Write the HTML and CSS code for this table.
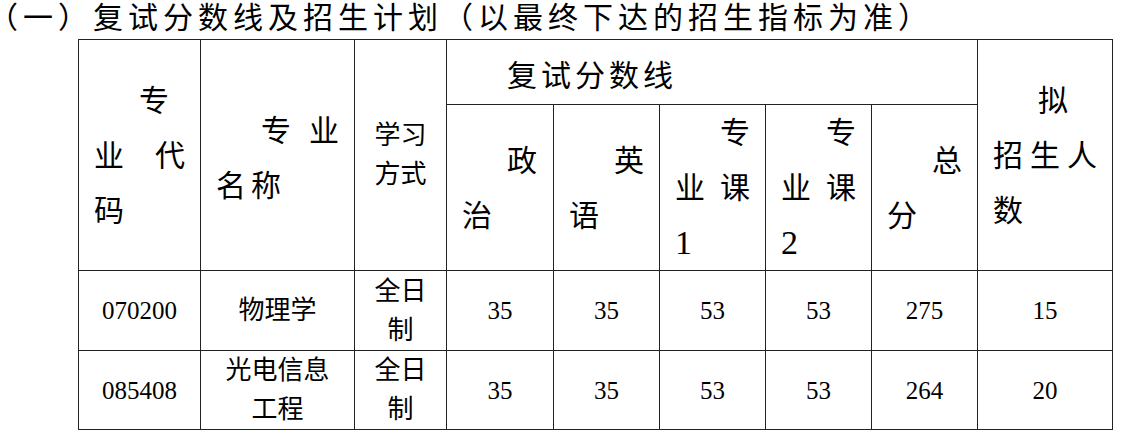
FILE: index.html
```html
<!DOCTYPE html>
<html lang="zh-CN">
<head>
<meta charset="utf-8">
<title>复试分数线及招生计划</title>
<link rel="stylesheet" href="styles.css">
</head>
<body>
<h1 class="title"><span class="lp">（</span>一）复试分数线及招生计划（以最终下达的招生指标为准）</h1>
<table class="plan">
  <colgroup>
    <col class="w-code"><col class="w-name"><col class="w-mode">
    <col class="w-s1"><col class="w-s"><col class="w-s"><col class="w-s"><col class="w-s">
    <col class="w-num">
  </colgroup>
  <tr class="r-h1">
    <td rowspan="2" class="hc">
      <div class="ln ind">专</div>
      <div class="ln j"><span>业</span><span>代</span></div>
      <div class="ln">码</div>
    </td>
    <td rowspan="2" class="hc shift">
      <div class="ln ind j"><span>专</span><span>业</span></div>
      <div class="ln sp">名称</div>
    </td>
    <td rowspan="2" class="mode">学习<br>方式</td>
    <td colspan="5" class="group">复试分数线</td>
    <td rowspan="2" class="hc">
      <div class="ln ind">拟</div>
      <div class="ln j"><span>招</span><span>生</span><span>人</span></div>
      <div class="ln">数</div>
    </td>
  </tr>
  <tr class="r-h2">
    <td class="hc"><div class="ln ind">政</div><div class="ln">治</div></td>
    <td class="hc"><div class="ln ind">英</div><div class="ln">语</div></td>
    <td class="hc"><div class="ln ind">专</div><div class="ln j"><span>业</span><span>课</span></div><div class="ln dg">1</div></td>
    <td class="hc"><div class="ln ind">专</div><div class="ln j"><span>业</span><span>课</span></div><div class="ln dg">2</div></td>
    <td class="hc"><div class="ln ind">总</div><div class="ln">分</div></td>
  </tr>
  <tr class="r-d1">
    <td class="num">070200</td>
    <td class="txt">物理学</td>
    <td class="txt">全日<br>制</td>
    <td class="num">35</td>
    <td class="num">35</td>
    <td class="num">53</td>
    <td class="num">53</td>
    <td class="num">275</td>
    <td class="num">15</td>
  </tr>
  <tr class="r-d2">
    <td class="num">085408</td>
    <td class="txt">光电信息<br>工程</td>
    <td class="txt">全日<br>制</td>
    <td class="num">35</td>
    <td class="num">35</td>
    <td class="num">53</td>
    <td class="num">53</td>
    <td class="num">264</td>
    <td class="num">20</td>
  </tr>
</table>
</body>
</html>
```

FILE: styles.css
```css
html, body {
  margin: 0;
  background: #ffffff;
  color: #000000;
  font-family: "Liberation Serif", "Noto Sans CJK SC", serif;
}

.title {
  margin: 0 0 3px 0;
  padding-left: 3px;
  font-size: 30px;
  font-weight: normal;
  line-height: 36px;
  letter-spacing: 5px;
  white-space: nowrap;
}

.lp {
  font-feature-settings: "halt";
}

.plan {
  margin-left: 78px;
  width: 1034px;
  border-collapse: collapse;
  table-layout: fixed;
}

.w-code { width: 122px; }
.w-name { width: 154px; }
.w-mode { width: 92px; }
.w-s1 { width: 107px; }
.w-s { width: 106px; }
.w-num { width: 135px; }

.r-h1 { height: 65px; }
.r-h2 { height: 166px; }
.r-d1 { height: 80px; }
.r-d2 { height: 79px; }

.plan td {
  border: 1px solid #222222;
  padding: 0;
  vertical-align: middle;
}

.plan td.hc {
  padding: 0 15px;
  font-size: 30px;
  line-height: 55px;
}

.plan td.shift {
  padding-top: 6px;
}

.ln {
  white-space: nowrap;
}

.ind {
  padding-left: 45px;
}

.j {
  display: flex;
  justify-content: space-between;
}

.sp {
  letter-spacing: 5px;
}

.dg {
  font-size: 34px;
}

.plan td.mode {
  padding: 0 15px;
  font-size: 26px;
  line-height: 39px;
  text-align: center;
}

.plan td.group {
  padding: 8px 15px 0 60px;
  font-size: 30px;
  line-height: 40px;
  letter-spacing: 4px;
}

.plan td.num {
  font-size: 25px;
  line-height: 39px;
  text-align: center;
}

.plan td.txt {
  font-size: 26px;
  line-height: 39px;
  text-align: center;
}
```
